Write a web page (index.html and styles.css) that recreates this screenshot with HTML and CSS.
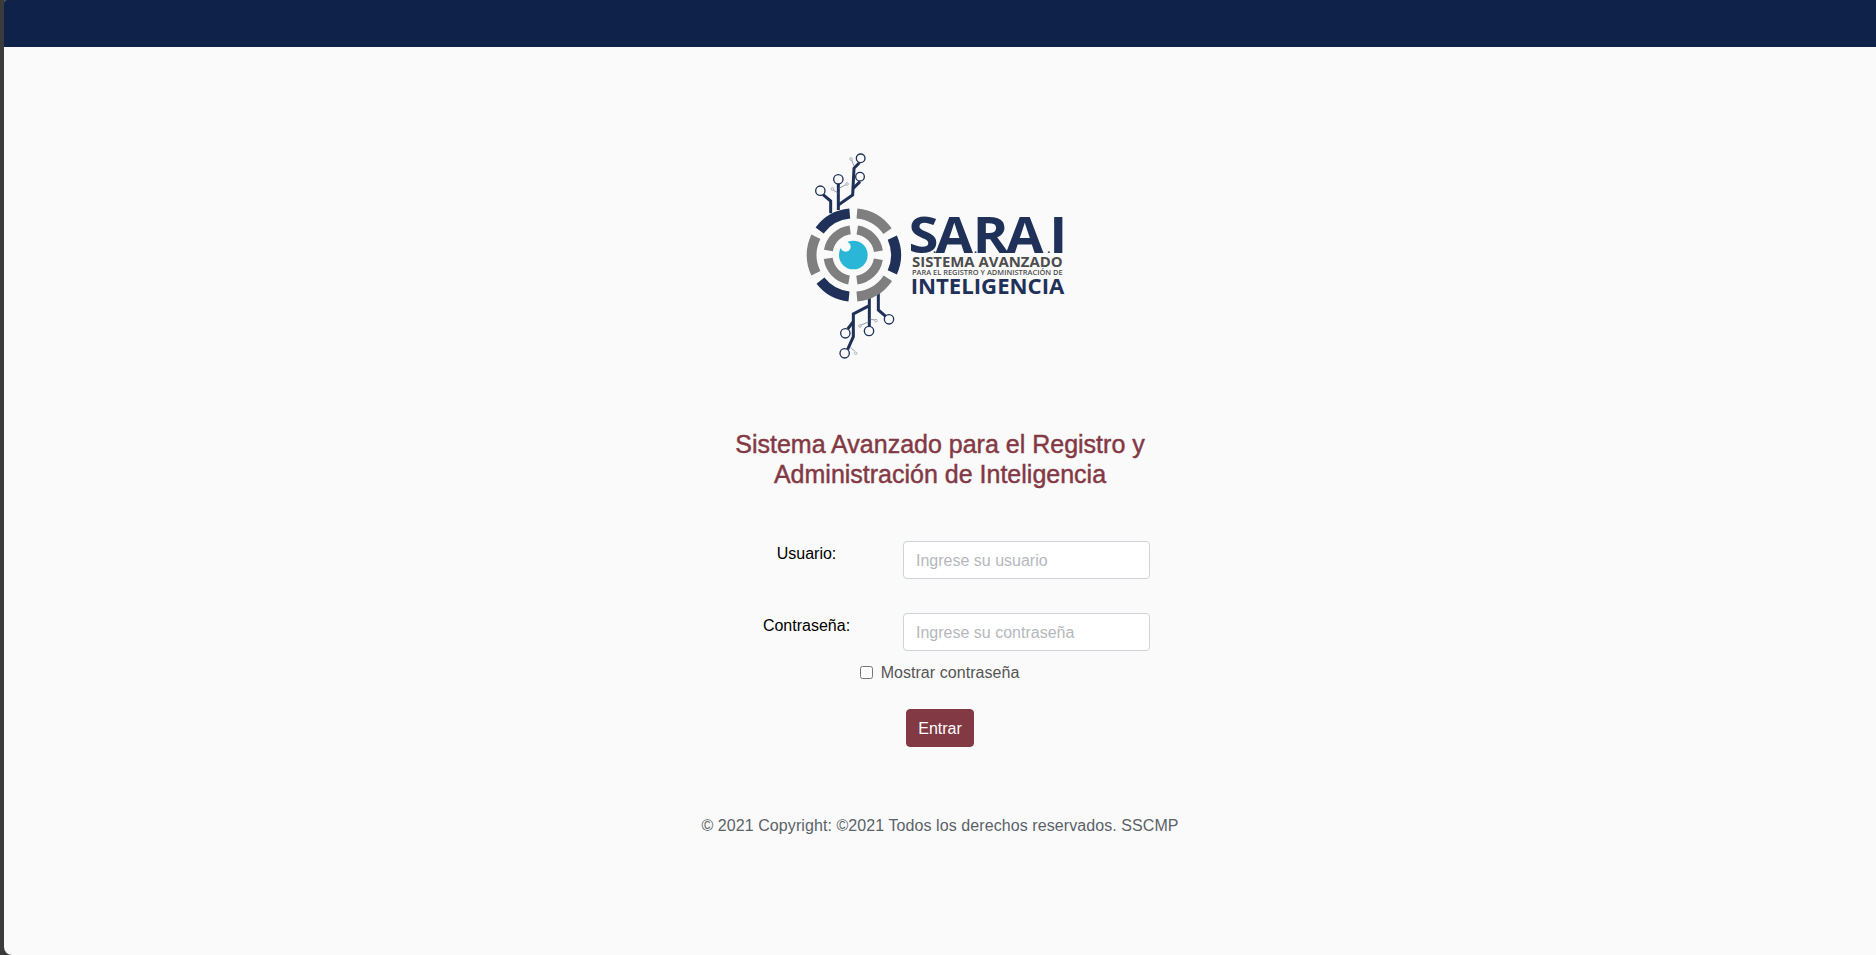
FILE: index.html
```html
<!DOCTYPE html>
<html lang="es">
<head>
    <meta charset="UTF-8">
    <meta name="viewport" content="width=device-width, initial-scale=1.0">
    <title>SARAI</title>
    <link rel="stylesheet" href="styles.css">
</head>
<body>
    <div class="app-window">
        <header class="top-bar"></header>
        <main class="login-page">
            <svg class="logo" viewBox="15 0 930 720" role="img" aria-label="SARAI">
                <!-- circuit, top -->
                <g class="trace">
                    <path d="M129 164 L152 183 V220"/>
                    <path d="M175 132 V210"/>
                    <path d="M175 195 L218 165 L222 85 L238 68"/>
                    <path d="M218 147 L240 125"/>
                </g>
                <g class="trace-thin">
                    <path d="M160 150 L175 160"/>
                    <path d="M198 134 L175 146"/>
                    <path d="M215 60 L222 78"/>
                </g>

                <!-- circuit, bottom -->
                <g class="trace">
                    <path d="M295 458 V510 L318 530"/>
                    <path d="M268 470 V560"/>
                    <path d="M268 497 L220 522 V590 L203 628"/>
                    <path d="M220 545 L203 567"/>
                </g>
                <g class="trace-thin">
                    <path d="M243 555 L268 545"/>
                    <path d="M285 540 L268 537"/>
                    <path d="M224 634 L212 622"/>
                </g>

                <g class="node">
                    <circle cx="242" cy="55" r="13"/>
                    <circle cx="240" cy="110" r="13"/>
                    <circle cx="175" cy="118" r="14"/>
                    <circle cx="121" cy="152" r="14"/>
                    <circle cx="196" cy="580" r="14"/>
                    <circle cx="267" cy="573" r="14"/>
                    <circle cx="327" cy="538" r="14"/>
                    <circle cx="194" cy="640" r="14"/>
                </g>
                <g class="node-small">
                    <circle cx="213" cy="57" r="4"/>
                    <circle cx="157" cy="147" r="4"/>
                    <circle cx="201" cy="132" r="4"/>
                    <circle cx="240" cy="558" r="4"/>
                    <circle cx="288" cy="542" r="4"/>
                    <circle cx="227" cy="640" r="4"/>
                </g>

                <!-- eye rings -->
                <g class="ring">
                    <circle class="navy" cx="220" cy="345" r="125" pathLength="360" stroke-dasharray="49 311" transform="rotate(216 220 345)"/>
                    <circle class="grey" cx="220" cy="345" r="125" pathLength="360" stroke-dasharray="50 310" transform="rotate(-85 220 345)"/>
                    <circle class="navy" cx="220" cy="345" r="128" pathLength="360" stroke-dasharray="48 312" transform="rotate(-24 220 345)"/>
                    <circle class="grey" cx="220" cy="345" r="125" pathLength="360" stroke-dasharray="51 309" transform="rotate(34 220 345)"/>
                    <circle class="navy" cx="220" cy="345" r="125" pathLength="360" stroke-dasharray="46 314" transform="rotate(96 220 345)"/>
                    <circle class="grey" cx="220" cy="345" r="125" pathLength="360" stroke-dasharray="52 308" transform="rotate(154 220 345)"/>
                    <circle class="grey inner" cx="220" cy="345" r="76" pathLength="360" stroke-dasharray="72 18" transform="rotate(-81 220 345)"/>
                </g>
                <circle class="eye" cx="220" cy="345" r="43"/>
                <circle class="eye-glint" cx="197" cy="320" r="15"/>

                <!-- wordmark -->
                <text class="word word-main" transform="translate(390 338) scale(1.08 1)"><tspan x="-4">S</tspan><tspan class="dot" x="64">.</tspan><tspan x="71">A</tspan><tspan class="dot" x="178">.</tspan><tspan x="174">R</tspan><tspan class="dot" x="272">.</tspan><tspan x="267">A</tspan><tspan class="dot" x="381">.</tspan><tspan x="387">I</tspan></text>
                <text class="word word-sub" x="396" y="382" textLength="452" lengthAdjust="spacingAndGlyphs">SISTEMA AVANZADO</text>
                <text class="word word-small" x="396" y="406" textLength="452" lengthAdjust="spacingAndGlyphs">PARA EL REGISTRO Y ADMINISTRACIÓN DE</text>
                <text class="word word-last" x="392" y="461" textLength="461" lengthAdjust="spacingAndGlyphs">INTELIGENCIA</text>
            </svg>

            <h4 class="login-title">Sistema Avanzado para el Registro y<br>Administración de Inteligencia</h4>

            <form class="login-form">
                <div class="form-row">
                    <label for="usuario">Usuario:</label>
                    <input type="text" id="usuario" class="form-input" placeholder="Ingrese su usuario">
                </div>
                <div class="form-row">
                    <label for="contrasena">Contraseña:</label>
                    <input type="password" id="contrasena" class="form-input" placeholder="Ingrese su contraseña">
                </div>
                <div class="show-password">
                    <input type="checkbox" id="mostrar">
                    <label for="mostrar">Mostrar contraseña</label>
                </div>
                <button type="submit" class="login-button">Entrar</button>
            </form>

            <footer class="login-footer">© 2021 Copyright: ©2021 Todos los derechos reservados. SSCMP</footer>
        </main>
    </div>
</body>
</html>
```

FILE: styles.css
```css
/* Global styles */
body {
    margin: 0;
    height: 955px;
    overflow: hidden;
    background: #3b3b3b;
    font-family: "Liberation Sans", Arial, sans-serif;
    font-size: 16px;
    line-height: 1.5;
}

.app-window {
    margin-left: 4px;
    height: 955px;
    background: #fafafa;
    border-top-left-radius: 3px;
    border-bottom-left-radius: 8px;
    overflow: hidden;
}

.top-bar {
    height: 47px;
    background: #0f2249;
}

.login-page {
    display: flex;
    flex-direction: column;
    align-items: center;
    padding-top: 93px;
}

/* Logo */
.logo {
    display: block;
    width: 310px;
    height: 240px;
}

.trace,
.trace-thin {
    fill: none;
    stroke: #1f3158;
    stroke-width: 9;
}

.trace-thin {
    stroke: #5d6b88;
    stroke-width: 2;
}

.node {
    fill: #fafafa;
    stroke: #1f3158;
    stroke-width: 4;
}

.node-small {
    fill: #fafafa;
    stroke: #8d94a6;
    stroke-width: 2;
}

.ring circle {
    fill: none;
    stroke-width: 30;
}

.ring .navy {
    stroke: #1f3158;
}

.ring .grey {
    stroke: #7f7f7f;
}

.ring .inner {
    stroke-width: 27;
}

.eye {
    fill: #2ab6d6;
}

.eye-glint {
    fill: #fafafa;
}

.word {
    font-family: "Open Sans", sans-serif;
    font-weight: 700;
}

.word-main {
    font-size: 151px;
    fill: #1f3158;
}

.word-main .dot {
    font-size: 30px;
}

.word-sub {
    font-size: 42px;
    fill: #4d4d4d;
}

.word-small {
    font-size: 21px;
    font-weight: 600;
    fill: #4d4d4d;
}

.word-last {
    font-size: 65px;
    fill: #1f3158;
}

/* Form */
.login-title {
    margin: 49px 0 52px;
    color: #833944;
    font-size: 25px;
    font-weight: 500;
    line-height: 30px;
    text-align: center;
    -webkit-text-stroke: 0.45px #833944;
}

.login-form {
    display: flex;
    flex-direction: column;
    align-items: center;
    width: 460px;
}

.form-row {
    display: grid;
    grid-template-columns: 193px 247px;
    width: 100%;
    margin-bottom: 34px;
}

.form-row:nth-child(2) {
    margin-bottom: 10px;
}

.form-row label {
    padding-top: 1px;
    color: #000;
    text-align: center;
}

.form-input {
    box-sizing: border-box;
    height: 38px;
    padding: 7px 12px 5px;
    border: 1px solid #ced4da;
    border-radius: 4px;
    background: #fff;
    font: inherit;
}

.form-input::placeholder {
    color: #b4b8bc;
}

.show-password {
    display: flex;
    align-items: center;
    gap: 8px;
    color: #555;
    letter-spacing: 0.05px;
}

.show-password input {
    width: 13px;
    height: 13px;
    margin: 0 0 1px -1px;
}

.login-button {
    width: 68px;
    height: 38px;
    margin-top: 24px;
    padding: 1px 0 0;
    border: 1px solid #833944;
    border-radius: 4px;
    background: #833944;
    color: #fff;
    font: inherit;
    cursor: pointer;
}

.login-footer {
    margin-top: 67px;
    color: #5a6268;
    letter-spacing: 0.08px;
}
```
